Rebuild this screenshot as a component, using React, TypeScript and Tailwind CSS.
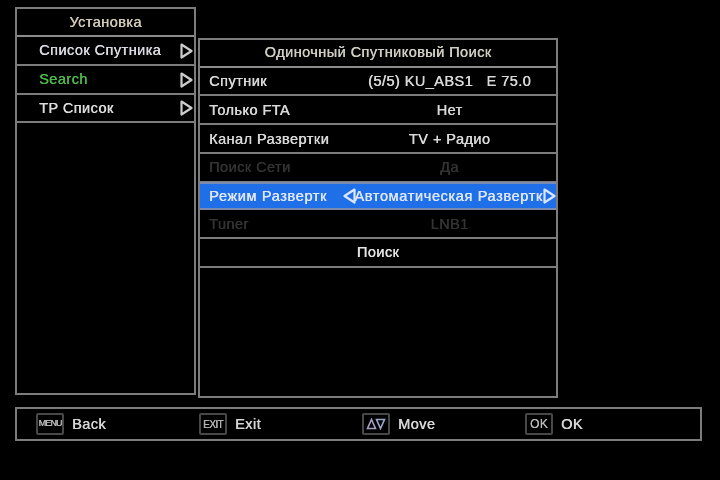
const sideRows = [
  { label: "Список Спутника", color: "text-[#d8d8e0]" },
  { label: "Search", color: "text-[#4fb84a]" },
  { label: "TP Список", color: "text-[#dcdcdc]" },
];

const searchRows = [
  { label: "Спутник", value: "(5/5) KU_ABS1   E 75.0", dim: false },
  { label: "Только FTA", value: "Нет", dim: false },
  { label: "Канал Развертки", value: "TV + Радио", dim: false },
  { label: "Поиск Сети", value: "Да", dim: true },
];

function Arrow({ left = false, light = false, className = "" }: { left?: boolean; light?: boolean; className?: string }) {
  return (
    <svg width="13" height="16" viewBox="0 0 13 16" className={className}>
      <path
        d={left ? "M11.5 1.5 L1.5 8 L11.5 14.5 Z" : "M1.5 1.5 L11.5 8 L1.5 14.5 Z"}
        fill="none"
        stroke={light ? "#dce6fc" : "#cccccc"}
        strokeWidth="2.2"
        strokeLinejoin="round"
      />
    </svg>
  );
}

function KeyCap({ children }: { children: React.ReactNode }) {
  return (
    <div className="w-[28px] h-[22px] flex items-center justify-center border-2 border-[#484848] rounded-[2px] text-[#b8b8b8]">
      {children}
    </div>
  );
}

function Hint({ cap, label, width }: { cap: React.ReactNode; label: string; width: string }) {
  return (
    <div className={`flex items-center gap-[8px] ${width}`}>
      <KeyCap>{cap}</KeyCap>
      <span className="text-[14.5px] text-[#d6d6d6] mt-[2px]">{label}</span>
    </div>
  );
}

export default function App() {
  return (
    <div className="w-[720px] h-[480px] bg-black pt-[7px] pl-[15px] overflow-hidden font-['Liberation_Sans',sans-serif] tracking-[0.45px] [text-shadow:0.45px_0_0_currentColor] blur-[0.5px]">
      <div className="flex items-start gap-[2px] h-[390px]">
        {/* Left menu */}
        <div className="w-[181px] h-[388px] border-2 border-[#7c7c7c] flex flex-col">
          <div className="h-[28px] shrink-0 flex items-center justify-center pt-[1px] border-b-2 border-[#8c8c8c] text-[14.5px] text-[#d0c8b4]">
            Установка
          </div>
          {sideRows.map((row) => (
            <div key={row.label} className="h-[28.8px] shrink-0 flex items-center justify-between pt-[1px] pl-[22px] pr-[1px] border-b-2 border-[#7c7c7c]">
              <span className={`text-[14.5px] ${row.color}`}>{row.label}</span>
              <Arrow />
            </div>
          ))}
        </div>

        {/* Search panel */}
        <div className="w-[360px] h-[360px] mt-[31px] border-2 border-[#7c7c7c] flex flex-col">
          <div className="h-[27.5px] shrink-0 flex items-center justify-center pt-[1px] border-b-2 border-[#8c8c8c] text-[14.5px] text-[#d0ccc0]">
            Одиночный Спутниковый Поиск
          </div>
          {searchRows.map((row) => (
            <SearchRow key={row.label} {...row} />
          ))}
          <div className="h-[28.8px] -mt-[1px] shrink-0 flex items-center bg-[#1e6fe8] border-y-2 border-[#7c8cb0] text-[14.5px] tracking-[0.65px] text-[#dde6fa]">
            <span className="w-[143px] pl-[9px] pt-[1px] shrink-0 whitespace-pre">Режим Развертк</span>
            <Arrow left light className="shrink-0" />
            <span className="whitespace-pre flex-1 pt-[1px] text-center -ml-[4px] -mr-[2px]">Автоматическая Развертк</span>
            <Arrow light className="shrink-0" />
          </div>
          <SearchRow label="Tuner" value="LNB1" dim />
          <div className="h-[28.8px] shrink-0 flex items-center justify-center pt-[1px] border-b-2 border-[#7c7c7c] text-[14.5px] text-[#e4e4e4]">
            Поиск
          </div>
        </div>
      </div>

      {/* Footer hints */}
      <div className="w-[687px] h-[34px] mt-[10px] border-2 border-[#7c7c7c] flex items-center pl-[19px]">
        <Hint width="w-[163px]" label="Back" cap={<span className="text-[9px] tracking-[-0.9px]">MENU</span>} />
        <Hint width="w-[163px]" label="Exit" cap={<span className="text-[10px] tracking-[-0.6px]">EXIT</span>} />
        <Hint
          width="w-[163px]"
          label="Move"
          cap={
            <svg width="20" height="12" viewBox="0 0 20 12" fill="none" strokeWidth="1.6">
              <path d="M5.5 1.5 L9.5 10.5 H1.5 Z" stroke="#a8a0c4" />
              <path d="M10.5 1.5 H18.5 L14.5 10.5 Z" stroke="#98a8cc" />
            </svg>
          }
        />
        <Hint width="w-[80px]" label="OK" cap={<span className="text-[12px]">OK</span>} />
      </div>
    </div>
  );
}

function SearchRow({ label, value, dim }: { label: string; value: string; dim: boolean }) {
  return (
    <div
      className={`h-[28.8px] shrink-0 flex items-center pt-[2px] border-b-2 border-[#7c7c7c] text-[14.5px] ${
        dim ? "text-[#333333]" : "text-[#d8d8d8]"
      }`}
    >
      <span className="w-[143px] pl-[9px] shrink-0">{label}</span>
      <span className="flex-1 text-center whitespace-pre">{value}</span>
    </div>
  );
}
